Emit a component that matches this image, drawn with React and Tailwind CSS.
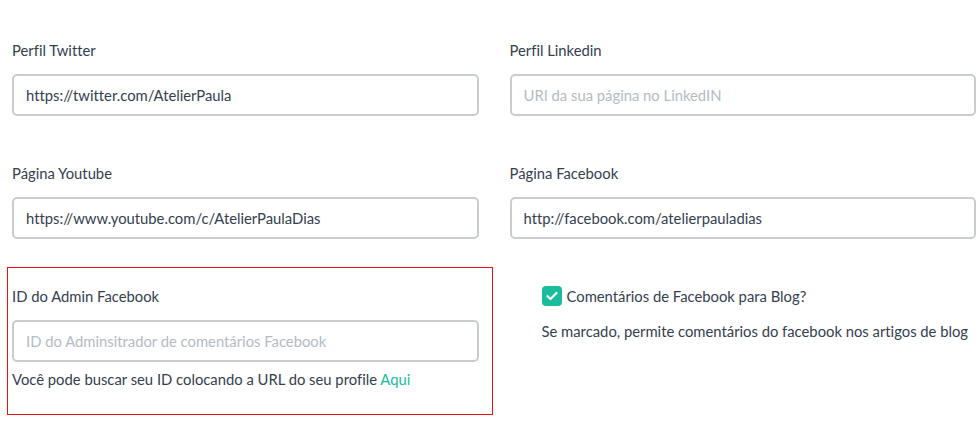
import { useState } from "react";

const Field = ({ label, value, placeholder }) => (
  <div className="flex flex-col">
    <span className="text-[14.8px] leading-[20px]">{label}</span>
    <input
      type="text"
      defaultValue={value}
      placeholder={placeholder}
      className="mt-[14px] h-[42px] w-full rounded-[5px] border-2 border-[#c9cdd1] bg-white px-[12px] text-[14.8px] text-[#34404f] placeholder:text-[#b4bbc3] focus:outline-none"
    />
  </div>
);

const App = () => {
  const [checked, setChecked] = useState(true);

  return (
    <div
      className="h-[444px] w-[978px] bg-white pt-[40px] pl-[12px] pr-[2px] text-[#34404f] [font-variant-ligatures:none]"
      style={{ fontFamily: "Lato, 'Open Sans', sans-serif" }}
    >
      <div className="grid grid-cols-2 gap-x-[31px] gap-y-[47px]">
        <Field label="Perfil Twitter" value="https://twitter.com/AtelierPaula" />
        <Field label="Perfil Linkedin" placeholder="URI da sua página no LinkedIN" />
        <Field label="Página Youtube" value="https://www.youtube.com/c/AtelierPaulaDias" />
        <Field label="Página Facebook" value="http://facebook.com/atelierpauladias" />

        <div className="relative">
          <div className="pointer-events-none absolute left-[-5px] right-[-14px] top-[-19px] bottom-[-26px] border border-[#ee1111]" />
          <Field
            label="ID do Admin Facebook"
            placeholder="ID do Adminsitrador de comentários Facebook"
          />
          <p className="mt-[7px] text-[14.8px] leading-[20px]">
            Você pode buscar seu ID colocando a URL do seu profile{" "}
            <a href="#" className="text-[#1abc9c]">
              Aqui
            </a>
          </p>
        </div>

        <div className="flex flex-col pl-[32px]">
          <label className="flex items-center gap-[5px] text-[14.8px] leading-[20px]">
            <button
              type="button"
              onClick={() => setChecked(!checked)}
              className={`flex h-[20px] w-[20px] items-center justify-center rounded-[4px] ${
                checked ? "bg-[#1abc9c]" : "border-2 border-[#c9cdd1] bg-white"
              }`}
            >
              {checked && (
                <svg width="12" height="10" viewBox="0 0 12 10" fill="none">
                  <path
                    d="M1.5 5.2L4.5 8L10.5 2"
                    stroke="white"
                    strokeWidth="2.2"
                    strokeLinecap="round"
                    strokeLinejoin="round"
                  />
                </svg>
              )}
            </button>
            Comentários de Facebook para Blog?
          </label>
          <p className="mt-[15px] text-[14.8px] leading-[20px]">
            Se marcado, permite comentários do facebook nos artigos de blog
          </p>
        </div>
      </div>
    </div>
  );
};

export default App;
